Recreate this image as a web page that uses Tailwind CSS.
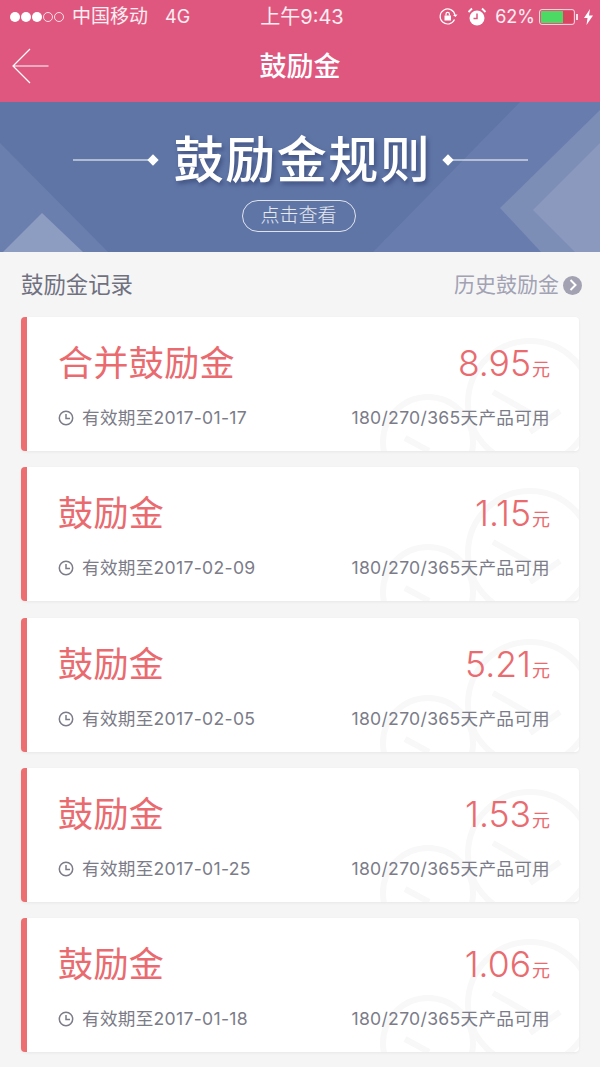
<!DOCTYPE html>
<html lang="zh-CN">
<head>
  <meta charset="UTF-8" />
  <meta name="viewport" content="width=device-width, initial-scale=1.0"/>
  <title>鼓励金</title>
  <script src="https://cdn.jsdelivr.net/npm/@tailwindcss/browser@4"></script>
</head>
<body class="w-[600px] h-[1067px] overflow-hidden bg-[#f5f5f6] font-['Inter','Noto_Sans_CJK_SC',sans-serif]">

  <!-- Status bar + nav -->
  <header class="h-[102px] bg-[#df577f] text-white">
    <div class="h-[34px] flex items-center pl-[10px] pr-[7px] relative text-[19px] leading-[34px] text-white/90">
      <div class="flex items-center gap-[1px]">
        <span class="w-[10px] h-[10px] rounded-full bg-white"></span>
        <span class="w-[10px] h-[10px] rounded-full bg-white"></span>
        <span class="w-[10px] h-[10px] rounded-full bg-white"></span>
        <span class="w-[10px] h-[10px] rounded-full border border-white/80"></span>
        <span class="w-[10px] h-[10px] rounded-full border border-white/80"></span>
      </div>
      <span class="ml-[8px]">中国移动</span>
      <span class="ml-[17px] text-[18px]">4G</span>
      <span class="absolute left-[4px] right-0 text-center text-[20px]">上午9:43</span>
      <div class="ml-auto flex items-center relative">
        <svg width="20" height="20" viewBox="0 0 20 20" class="mr-[9px]" fill="none" stroke="#fff" stroke-width="1.200">
          <path d="M16.500 12.500A7.500 7.500 0 1 1 17 8"/>
          <path d="M15 8l2.500 2 2-2.500" fill="#fff" stroke="none"/>
          <rect x="6.500" y="8.500" width="6.500" height="5" fill="#fff" stroke="none"/>
          <path d="M8 8.500V7a1.700 1.700 0 0 1 3.400 0v1.500"/>
        </svg>
        <svg width="20" height="20" viewBox="0 0 20 20" class="mr-[8px]">
          <circle cx="10" cy="11" r="7.500" fill="#fff"/>
          <path d="M10 6.500V11.500H6.500" fill="none" stroke="#df577f" stroke-width="1.500"/>
          <path d="M1.500 5L5 1.500M18.500 5L15 1.500" stroke="#fff" stroke-width="1.800"/>
        </svg>
        <span class="mr-[4px] text-[18px]">62%</span>
        <div class="w-[36px] h-[16px] border border-white/70 rounded-[3px] p-[1px] flex">
          <div class="w-[22px] bg-[#4cd964] rounded-l-[1px]"></div>
          <div class="w-[10px] bg-[#d9455f]"></div>
        </div>
        <div class="w-[2px] h-[6px] bg-white/80 ml-[1px] mr-[6px]"></div>
        <svg width="9" height="16" viewBox="0 0 9 16"><path d="M6 0L0 9h3.500L2.500 16 9 6.500H5z" fill="#fff"/></svg>
      </div>
    </div>
    <div class="h-[68px] relative flex items-center justify-center">
      <svg width="38" height="36" viewBox="0 0 38 36" class="absolute left-[11px] top-[14px]" fill="none" stroke="#fff" stroke-width="1.200">
        <path d="M19 1L2 18l17 17M2 18h35.500"/>
      </svg>
      <span class="text-[27px] font-medium relative top-[-1px]">鼓励金</span>
    </div>
  </header>

  <!-- Banner -->
  <section class="h-[150px] relative overflow-hidden bg-[#5f75a6] text-white">
    <svg width="600" height="150" viewBox="0 0 600 150" class="absolute inset-0">
      <path d="M0 41L108 150H0z" fill="#6a7fae"/>
      <path d="M3 150L42 111l41 39z" fill="#8d9cc1"/>
      <path d="M373 150L520 0H600V150z" fill="#697cae"/>
      <path d="M500 106L600 8V150H541z" fill="#7c8db6"/>
      <path d="M533 108L600 41V150H575z" fill="#8b99bf"/>
    </svg>
    <div class="relative flex items-center justify-center pt-[27px] h-[89px] pl-[1px]">
      <div class="w-[76px] h-[2px] bg-white/50"></div>
      <div class="w-[8px] h-[8px] rotate-45 bg-white mr-[17px]"></div>
      <h2 class="text-[50px] font-medium leading-[60px] tracking-[1.500px] [text-shadow:2px_3px_4px_rgba(40,55,100,0.55)]">鼓励金规则</h2>
      <div class="w-[8px] h-[8px] rotate-45 bg-white ml-[13px]"></div>
      <div class="w-[76px] h-[2px] bg-white/50"></div>
    </div>
    <div class="relative flex justify-center mt-[9px] pr-[3px]">
      <div class="w-[114px] h-[32px] rounded-full border border-white/80 text-[19px] leading-[30px] text-center text-white/85 font-light">点击查看</div>
    </div>
  </section>

  <!-- Section title -->
  <div class="h-[65px] pl-[21px] pr-[18px] pt-[1px] flex items-center justify-between">
    <span class="text-[22.400px] text-[#70717f]">鼓励金记录</span>
    <span class="flex items-center text-[21px] text-[#a2a2b3]">历史鼓励金
      <span class="ml-[4px] w-[19px] h-[19px] rounded-full bg-[#a2a2b3] flex items-center justify-center">
        <svg width="8" height="12" viewBox="0 0 8 12" fill="none" stroke="#fff" stroke-width="2"><path d="M1.500 1l5 5-5 5"/></svg>
      </span>
    </span>
  </div>

  <!-- Cards -->
  <main class="px-[21px] flex flex-col gap-[16.300px]">

    <article class="h-[134px] relative overflow-hidden bg-white rounded-[4px] border-l-[6px] border-[#ec6e71] shadow-[0_1px_3px_rgba(0,0,0,0.06)] pl-[31px] pr-[29px] flex flex-col">
      <svg width="240" height="134" viewBox="0 0 240 134" class="absolute right-0 top-0" fill="none" stroke="#f8f8f9" stroke-width="6">
        <circle cx="191" cy="86" r="62"/><path d="M154 75l44 25M221 94l-30 21"/>
        <circle cx="89" cy="125" r="45"/><path d="M66 121l24 13"/>
      </svg>
      <div class="relative flex items-center justify-between h-[92px] text-[#e96b6f]">
        <h3 class="text-[35px] leading-[46px] tracking-[0.400px]">合并鼓励金</h3>
        <p class="text-[35.500px] leading-[46px] font-light mt-[8px]">8.95<span class="text-[18px] ml-[1px] font-normal">元</span></p>
      </div>
      <div class="relative flex items-center -mt-[3px] text-[17.600px] leading-[24px] tracking-[0.300px] text-[#7b7c88]">
        <svg width="16" height="16" viewBox="0 0 16 16" class="mr-[8px]" fill="none" stroke="#7b7c88" stroke-width="1.500"><circle cx="8" cy="8" r="6.700"/><path d="M8 4v4.500h4"/></svg>
        <span>有效期至2017-01-17</span>
        <span class="ml-auto">180/270/365天产品可用</span>
      </div>
    </article>

    <article class="h-[134px] relative overflow-hidden bg-white rounded-[4px] border-l-[6px] border-[#ec6e71] shadow-[0_1px_3px_rgba(0,0,0,0.06)] pl-[31px] pr-[29px] flex flex-col">
      <svg width="240" height="134" viewBox="0 0 240 134" class="absolute right-0 top-0" fill="none" stroke="#f8f8f9" stroke-width="6">
        <circle cx="191" cy="86" r="62"/><path d="M154 75l44 25M221 94l-30 21"/>
        <circle cx="89" cy="125" r="45"/><path d="M66 121l24 13"/>
      </svg>
      <div class="relative flex items-center justify-between h-[92px] text-[#e96b6f]">
        <h3 class="text-[35px] leading-[46px] tracking-[0.400px]">鼓励金</h3>
        <p class="text-[35.500px] leading-[46px] font-light mt-[8px]">1.15<span class="text-[18px] ml-[1px] font-normal">元</span></p>
      </div>
      <div class="relative flex items-center -mt-[3px] text-[17.600px] leading-[24px] tracking-[0.300px] text-[#7b7c88]">
        <svg width="16" height="16" viewBox="0 0 16 16" class="mr-[8px]" fill="none" stroke="#7b7c88" stroke-width="1.500"><circle cx="8" cy="8" r="6.700"/><path d="M8 4v4.500h4"/></svg>
        <span>有效期至2017-02-09</span>
        <span class="ml-auto">180/270/365天产品可用</span>
      </div>
    </article>

    <article class="h-[134px] relative overflow-hidden bg-white rounded-[4px] border-l-[6px] border-[#ec6e71] shadow-[0_1px_3px_rgba(0,0,0,0.06)] pl-[31px] pr-[29px] flex flex-col">
      <svg width="240" height="134" viewBox="0 0 240 134" class="absolute right-0 top-0" fill="none" stroke="#f8f8f9" stroke-width="6">
        <circle cx="191" cy="86" r="62"/><path d="M154 75l44 25M221 94l-30 21"/>
        <circle cx="89" cy="125" r="45"/><path d="M66 121l24 13"/>
      </svg>
      <div class="relative flex items-center justify-between h-[92px] text-[#e96b6f]">
        <h3 class="text-[35px] leading-[46px] tracking-[0.400px]">鼓励金</h3>
        <p class="text-[35.500px] leading-[46px] font-light mt-[8px]">5.21<span class="text-[18px] ml-[1px] font-normal">元</span></p>
      </div>
      <div class="relative flex items-center -mt-[3px] text-[17.600px] leading-[24px] tracking-[0.300px] text-[#7b7c88]">
        <svg width="16" height="16" viewBox="0 0 16 16" class="mr-[8px]" fill="none" stroke="#7b7c88" stroke-width="1.500"><circle cx="8" cy="8" r="6.700"/><path d="M8 4v4.500h4"/></svg>
        <span>有效期至2017-02-05</span>
        <span class="ml-auto">180/270/365天产品可用</span>
      </div>
    </article>

    <article class="h-[134px] relative overflow-hidden bg-white rounded-[4px] border-l-[6px] border-[#ec6e71] shadow-[0_1px_3px_rgba(0,0,0,0.06)] pl-[31px] pr-[29px] flex flex-col">
      <svg width="240" height="134" viewBox="0 0 240 134" class="absolute right-0 top-0" fill="none" stroke="#f8f8f9" stroke-width="6">
        <circle cx="191" cy="86" r="62"/><path d="M154 75l44 25M221 94l-30 21"/>
        <circle cx="89" cy="125" r="45"/><path d="M66 121l24 13"/>
      </svg>
      <div class="relative flex items-center justify-between h-[92px] text-[#e96b6f]">
        <h3 class="text-[35px] leading-[46px] tracking-[0.400px]">鼓励金</h3>
        <p class="text-[35.500px] leading-[46px] font-light mt-[8px]">1.53<span class="text-[18px] ml-[1px] font-normal">元</span></p>
      </div>
      <div class="relative flex items-center -mt-[3px] text-[17.600px] leading-[24px] tracking-[0.300px] text-[#7b7c88]">
        <svg width="16" height="16" viewBox="0 0 16 16" class="mr-[8px]" fill="none" stroke="#7b7c88" stroke-width="1.500"><circle cx="8" cy="8" r="6.700"/><path d="M8 4v4.500h4"/></svg>
        <span>有效期至2017-01-25</span>
        <span class="ml-auto">180/270/365天产品可用</span>
      </div>
    </article>

    <article class="h-[134px] relative overflow-hidden bg-white rounded-[4px] border-l-[6px] border-[#ec6e71] shadow-[0_1px_3px_rgba(0,0,0,0.06)] pl-[31px] pr-[29px] flex flex-col">
      <svg width="240" height="134" viewBox="0 0 240 134" class="absolute right-0 top-0" fill="none" stroke="#f8f8f9" stroke-width="6">
        <circle cx="191" cy="86" r="62"/><path d="M154 75l44 25M221 94l-30 21"/>
        <circle cx="89" cy="125" r="45"/><path d="M66 121l24 13"/>
      </svg>
      <div class="relative flex items-center justify-between h-[92px] text-[#e96b6f]">
        <h3 class="text-[35px] leading-[46px] tracking-[0.400px]">鼓励金</h3>
        <p class="text-[35.500px] leading-[46px] font-light mt-[8px]">1.06<span class="text-[18px] ml-[1px] font-normal">元</span></p>
      </div>
      <div class="relative flex items-center -mt-[3px] text-[17.600px] leading-[24px] tracking-[0.300px] text-[#7b7c88]">
        <svg width="16" height="16" viewBox="0 0 16 16" class="mr-[8px]" fill="none" stroke="#7b7c88" stroke-width="1.500"><circle cx="8" cy="8" r="6.700"/><path d="M8 4v4.500h4"/></svg>
        <span>有效期至2017-01-18</span>
        <span class="ml-auto">180/270/365天产品可用</span>
      </div>
    </article>

  </main>
</body>
</html>
